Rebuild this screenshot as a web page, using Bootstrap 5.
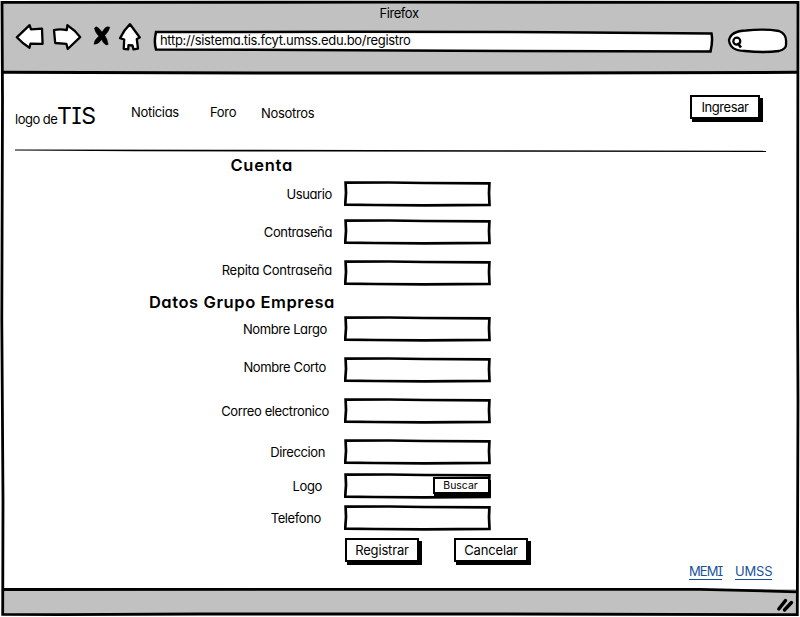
<!DOCTYPE html>
<html lang="es">
<head>
<meta charset="utf-8">
<meta name="viewport" content="width=device-width, initial-scale=1">
<title>Registro - TIS</title>
<link href="https://cdn.jsdelivr.net/npm/bootstrap@5.3.0/dist/css/bootstrap.min.css" rel="stylesheet">
<style>
body{font-family:"Inter","Noto Sans",sans-serif;font-size:13px;line-height:18px;letter-spacing:-.32px;color:#000;background:#fff;font-feature-settings:"cv08","cv11"}
.window{width:800px;height:617px}
.outline{left:0;top:0;pointer-events:none}
.chrome{height:72px;background:#c1c1c1;margin:0 2px;padding-top:4px}
.window-title{height:18px;letter-spacing:-.42px;padding-right:2px}
.tools{padding-left:12px}
.tools svg{display:block;flex:none}
.back{margin-right:5px}.next{margin-right:9px}.stop{margin-right:5px}.home{margin-right:10px}
.address{width:561px;height:24px;margin-top:8px;padding:.5px 0 0 7px;background:url("data:image/svg+xml,%3Csvg xmlns='http://www.w3.org/2000/svg' width='561' height='24'%3E%3Cpath d='M3 2L200 1.8L400 2.2L558.5 3.4Q560 11 557.5 21.6L300 20.8L3 19.4Q.7 12 3 2Z' fill='%23fff' stroke='%23000' stroke-width='2.5'/%3E%3C/svg%3E") no-repeat}
.lookup{margin-left:12px;margin-top:4px}
.site{height:77px;padding:0 40px 0 15px}
.brand-sm{width:42px;padding-top:37.5px;letter-spacing:-.5px}
.brand-lg{width:74px;font-size:23px;font-weight:400;line-height:28px;padding-top:30px;letter-spacing:-.4px}
.site a.plain{color:#000;text-decoration:none;padding-top:31px}
.news{width:79px}.forum{width:51px}
.site a.plain.about{padding-top:32px}
.rule{display:block;margin-left:15px}
.signup{width:492px}
.group-title{font-size:16.5px;font-weight:600;line-height:24px;height:24px;letter-spacing:.75px;margin:0}
.account{width:293px}
.company{width:335px;margin-top:4px;letter-spacing:.58px}
.entry{height:26px}
.entry label{width:332px;margin-right:12px;text-align:right;line-height:26px;letter-spacing:-.38px}
.sketch{width:147px;height:26px;border:0;border-radius:0;padding:0 5px;background:url("data:image/svg+xml,%3Csvg xmlns='http://www.w3.org/2000/svg' width='147' height='26'%3E%3Cpath d='M1.6 1.6L45 1.5L80 2L145.4 2.3L145 12L145.5 23.8L80 24.4L30 24L1.2 23.7L2 12Z' fill='%23fff' stroke='%23000' stroke-width='2.7'/%3E%3C/svg%3E") no-repeat}
.g4{margin-top:4px}.g12{margin-top:12px}.g15{margin-top:15px}.g2{margin-top:2px}.g8{margin-top:8px}.g6{margin-top:6px}
.entry .lift{padding-bottom:5px;line-height:21px}
.in3{padding-right:3px}.in5{padding-right:5px}.in6{padding-right:6px}.in7{padding-right:7px}.in10{padding-right:10px}.in11{padding-right:11px}
.entry .wide{letter-spacing:-.25px}
.push{--bs-btn-padding-x:0;--bs-btn-padding-y:0;--bs-btn-font-size:13px;--bs-btn-border-radius:0;--bs-btn-border-width:2px;--bs-btn-border-color:#000;--bs-btn-bg:#fff;--bs-btn-color:#000;--bs-btn-line-height:20px;background:#fff;box-shadow:2px 3px 0 #000,3px 3px 0 #000;height:24px;flex:none}
.enter{width:70px;margin-top:23px;letter-spacing:-.42px}
.actions{margin:7px 0 0 345px;gap:35px}
.register,.cancel{width:74px;letter-spacing:-.15px}
.browse{width:57px;height:17px;right:1px;top:4px;--bs-btn-font-size:10.5px;--bs-btn-line-height:13px;letter-spacing:-.05px;box-shadow:1px 3px 0 #000;padding-right:2px}
.foot{padding-right:28px;gap:13px;margin-top:2px}
.foot a{color:#19529c;text-decoration:none;border-bottom:1px solid #19529c;line-height:15px;height:16px}
.memi{width:33px;letter-spacing:-.95px}.umss{width:37px;letter-spacing:-.2px}
.status{height:26px;background:#c1c1c1;margin:auto 2px 2px 3px;padding:8px 4px 0 0}
</style>
</head>
<body>
<div class="window position-relative d-flex flex-column overflow-hidden">
  <header class="chrome flex-shrink-0">
    <div class="window-title text-center">Firefox</div>
    <div class="tools d-flex align-items-start">
      <svg class="back" width="32" height="30" viewBox="14 22 32 30"><path d="M16.8 37.3L29.6 25.2L31 29.3L42 28.6L42.6 43.8L30.5 43.6L29.5 47.8Q22 43 16.8 37.3Z" fill="#fff" stroke="#000" stroke-width="2.3" stroke-linejoin="round"/></svg>
      <svg class="next" width="32" height="30" viewBox="51 22 32 30"><path d="M54 30Q60 28.6 66.8 30L67.4 25.2Q75 30 80.2 37.2L67.7 49L66.4 43.8L55.2 43Z" fill="#fff" stroke="#000" stroke-width="2.3" stroke-linejoin="round"/></svg>
      <svg class="stop" width="20" height="30" viewBox="92 22 20 30"><path d="M94.5 28Q96 25.5 99 28.5L102 32L105 28Q107 26 109.8 27.2Q109 31 104.8 35.6Q107.5 39 108.2 44.4Q105 46.5 101.6 39.5Q98.5 44.5 94 44.2Q94 40 98.8 36.2Q94.5 31.5 94.5 28Z" stroke="#000" stroke-width=".5"/></svg>
      <svg class="home" width="26" height="30" viewBox="117 22 26 30"><path d="M130 24.2L139.8 37.5L136.8 39L138 48.6L133.5 49.4L132.5 45.5L128.5 45.2L128.2 49.4L123.7 48.8L124.2 39.5L120 38.2Q124 30 130 24.2Z" fill="#fff" stroke="#000" stroke-width="2.3" stroke-linejoin="round"/></svg>
      <div class="address">http://sistema.tis.fcyt.umss.edu.bo/registro</div>
      <svg class="lookup" width="64" height="30" viewBox="726 26 64 30"><path d="M729 40Q731 31 746 30.5Q764 28.5 779 31Q787 34 786 43Q787 49 779 51Q764 53 745 51Q730 51 729 40Z" fill="#fff" stroke="#000" stroke-width="2.3"/><circle cx="736.8" cy="41.2" r="3.5" fill="none" stroke="#000" stroke-width="2.2"/><path d="M737.5 43L741 47.5" stroke="#000" stroke-width="2.6"/></svg>
    </div>
  </header>

  <nav class="site d-flex align-items-start flex-shrink-0">
    <span class="brand-sm text-nowrap">logo de</span><span class="brand-lg">TIS</span>
    <a class="plain news" href="#">Noticias</a>
    <a class="plain forum" href="#">Foro</a>
    <a class="plain about" href="#">Nosotros</a>
    <button class="btn push enter ms-auto" type="button">Ingresar</button>
  </nav>
  <svg class="rule flex-shrink-0" width="752" height="4"><path d="M0 .6L200 .8L480 1.2L751 1.8L751 3L300 2.5L120 2.2L0 1.4Z"/></svg>

  <form class="signup flex-shrink-0">
    <h2 class="group-title account text-end">Cuenta</h2>
    <div class="entry g4 d-flex"><label for="f1">Usuario</label><input id="f1" class="form-control sketch"></div>
    <div class="entry g12 d-flex"><label for="f2">Contraseña</label><input id="f2" class="form-control sketch"></div>
    <div class="entry g15 d-flex"><label for="f3" class="lift wide">Repita Contraseña</label><input id="f3" class="form-control sketch"></div>
    <h2 class="group-title company text-end">Datos Grupo Empresa</h2>
    <div class="entry g2 d-flex"><label for="f4" class="in5">Nombre Largo</label><input id="f4" class="form-control sketch"></div>
    <div class="entry g15 d-flex"><label for="f5" class="lift in6">Nombre Corto</label><input id="f5" class="form-control sketch"></div>
    <div class="entry g15 d-flex"><label for="f6" class="in3">Correo electronico</label><input id="f6" class="form-control sketch"></div>
    <div class="entry g15 d-flex"><label for="f7" class="in7">Direccion</label><input id="f7" class="form-control sketch"></div>
    <div class="entry g8 d-flex"><label for="f8" class="in10">Logo</label>
      <div class="position-relative"><input id="f8" class="form-control sketch"><button class="btn push browse position-absolute" type="button">Buscar</button></div>
    </div>
    <div class="entry g6 d-flex"><label for="f9" class="in11">Telefono</label><input id="f9" class="form-control sketch"></div>
    <div class="actions d-flex">
      <button class="btn push register" type="button">Registrar</button>
      <button class="btn push cancel" type="button">Cancelar</button>
    </div>
  </form>

  <div class="foot d-flex justify-content-end flex-shrink-0"><a class="memi" href="#">MEMI</a><a class="umss" href="#">UMSS</a></div>

  <footer class="status d-flex justify-content-end flex-shrink-0">
    <svg width="18" height="16" viewBox="777 596 18 16"><path d="M779.8 608L786.5 599.5M785.5 609L792.5 601.5" stroke="#000" stroke-width="3.4" stroke-linecap="round"/></svg>
  </footer>

  <svg class="outline position-absolute" width="800" height="617" fill="none" stroke="#000">
    <path d="M0 0H800V1.5H0ZM0 0H1.5V617H0ZM799 0H800V617H799ZM0 615.5H800V617H0Z" fill="#fff" stroke="none"/>
    <path d="M2 2.3L400 2.2L798 2.3L797.6 300L798 400L797.3 614.6L500 614L200 614L60 614.7L2.7 614.3L3 500L1.8 320L2.5 100Z" stroke-width="2.8"/>
    <path d="M2 72.3L300 73L540 73L798 72.3" stroke-width="3"/>
    <path d="M3 589.5L300 589.3L700 589.3L797 591.8" stroke-width="2.8"/>
  </svg>
</div>
<script src="https://cdn.jsdelivr.net/npm/bootstrap@5.3.0/dist/js/bootstrap.bundle.min.js"></script>
</body>
</html>
